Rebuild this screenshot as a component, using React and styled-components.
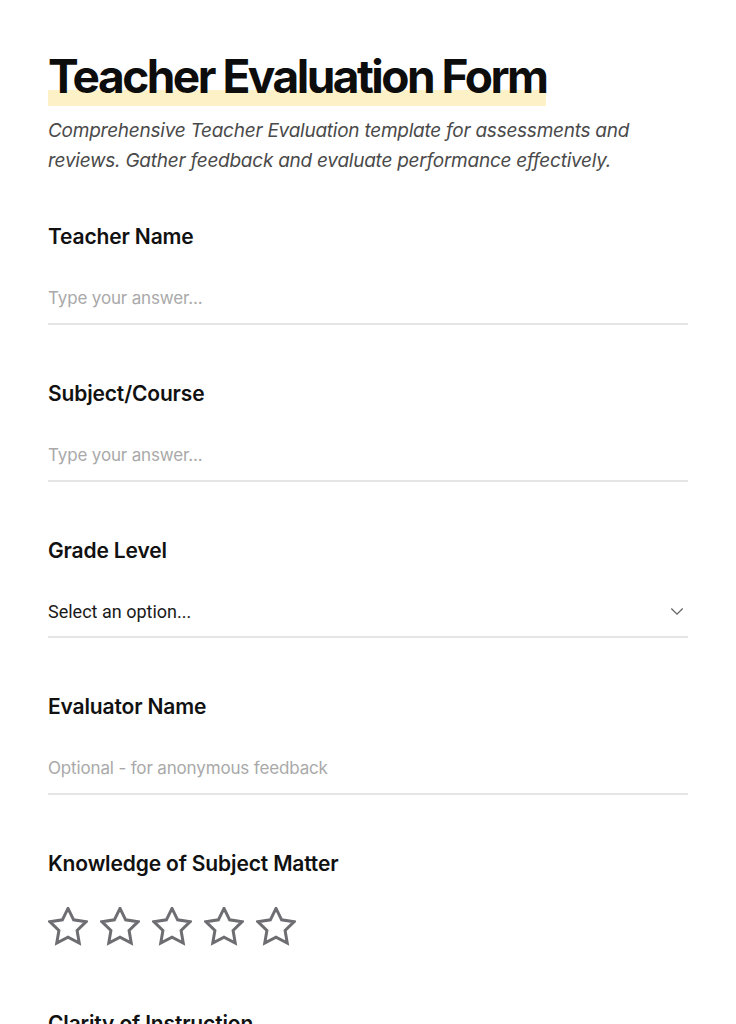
import React from 'react';
import styled, { createGlobalStyle } from 'styled-components';

const GlobalStyle = createGlobalStyle`
  html, body {
    margin: 0;
    padding: 0;
    background: #ffffff;
  }
  body {
    font-family: 'Inter', 'Noto Sans', sans-serif;
    color: #111111;
  }
  * { box-sizing: border-box; }
`;

const fields = [
  { label: 'Teacher Name', type: 'text', placeholder: 'Type your answer...' },
  { label: 'Subject/Course', type: 'text', placeholder: 'Type your answer...' },
  { label: 'Grade Level', type: 'select', placeholder: 'Select an option...' },
  { label: 'Evaluator Name', type: 'text', placeholder: 'Optional - for anonymous feedback' },
  { label: 'Knowledge of Subject Matter', type: 'rating' },
  { label: 'Clarity of Instruction', type: 'rating' },
];

function Star() {
  return (
    <StarSvg viewBox="1 1.2 22 22" width="40" height="40">
      <polygon
        points="12,2 15.09,8.26 22,9.27 17,14.14 18.18,21.02 12,17.77 5.82,21.02 7,14.14 2,9.27 8.91,8.26"
        fill="none"
        stroke="#6d6d72"
        strokeWidth="1.65"
        strokeLinejoin="miter"
      />
    </StarSvg>
  );
}

function Field({ field }) {
  return (
    <FieldBlock>
      <Label>{field.label}</Label>
      {field.type === 'text' && <TextInput type="text" placeholder={field.placeholder} />}
      {field.type === 'select' && (
        <SelectWrap>
          <Select defaultValue="">
            <option value="" disabled>{field.placeholder}</option>
          </Select>
          <Chevron viewBox="0 0 16 10" width="14" height="9">
            <path d="M1.5 1.5 L8 8 L14.5 1.5" fill="none" stroke="#666" strokeWidth="1.5" />
          </Chevron>
        </SelectWrap>
      )}
      {field.type === 'rating' && (
        <Stars>
          {[1, 2, 3, 4, 5].map((n) => <Star key={n} />)}
        </Stars>
      )}
    </FieldBlock>
  );
}

export default function App() {
  return (
    <>
      <GlobalStyle />
      <Page>
        <Title><Highlight>Teacher Evaluation Form</Highlight></Title>
        <Description>
          Comprehensive Teacher Evaluation template for assessments and reviews. Gather feedback and evaluate performance effectively.
        </Description>
        <Form>
          {fields.map((f, i) => <Field key={i} field={f} />)}
        </Form>
      </Page>
    </>
  );
}

const Page = styled.div`
  padding: 48px 48px 80px;
  width: 736px;
`;

const Title = styled.h1`
  margin: 0;
  font-size: 46px;
  line-height: 56px;
  font-weight: 700;
  letter-spacing: -2.5px;
  color: #0d0d0d;
`;

const Highlight = styled.span`
  background: linear-gradient(to bottom, transparent 72%, #fdf1c8 72%);
  padding-bottom: 2px;
`;

const Description = styled.p`
  margin: 12px 0 0;
  font-size: 19px;
  line-height: 30px;
  font-style: italic;
  color: #4a4a4a;
  letter-spacing: -0.25px;
`;

const Form = styled.div`
  display: flex;
  flex-direction: column;
  gap: 55px;
  margin-top: 47px;
`;

const FieldBlock = styled.div`
  display: flex;
  flex-direction: column;
  gap: 22px;
`;

const Label = styled.div`
  font-size: 21px;
  line-height: 28px;
  font-weight: 600;
  letter-spacing: -0.15px;
  color: #111111;
`;

const TextInput = styled.input`
  width: 100%;
  height: 52px;
  border: none;
  border-bottom: 2px solid #e5e5e5;
  padding: 0;
  font-family: inherit;
  font-size: 17px;
  letter-spacing: -0.15px;
  color: #222;
  outline: none;
  background: transparent;
  &::placeholder {
    color: #a9a9a9;
  }
`;

const SelectWrap = styled.div`
  position: relative;
  width: 100%;
`;

const Select = styled.select`
  appearance: none;
  width: 100%;
  height: 51px;
  border: none;
  border-bottom: 2px solid #e5e5e5;
  border-radius: 0;
  padding: 0;
  background: transparent;
  font-family: 'Roboto', 'Noto Sans', sans-serif;
  font-size: 18px;
  letter-spacing: 0;
  color: #1a1a1a;
  outline: none;
`;

const Chevron = styled.svg`
  position: absolute;
  right: 4px;
  top: 20px;
  pointer-events: none;
`;

const Stars = styled.div`
  display: flex;
  gap: 12px;
  margin-top: 7px;
  padding-bottom: 8px;
`;

const StarSvg = styled.svg`
  display: block;
`;
